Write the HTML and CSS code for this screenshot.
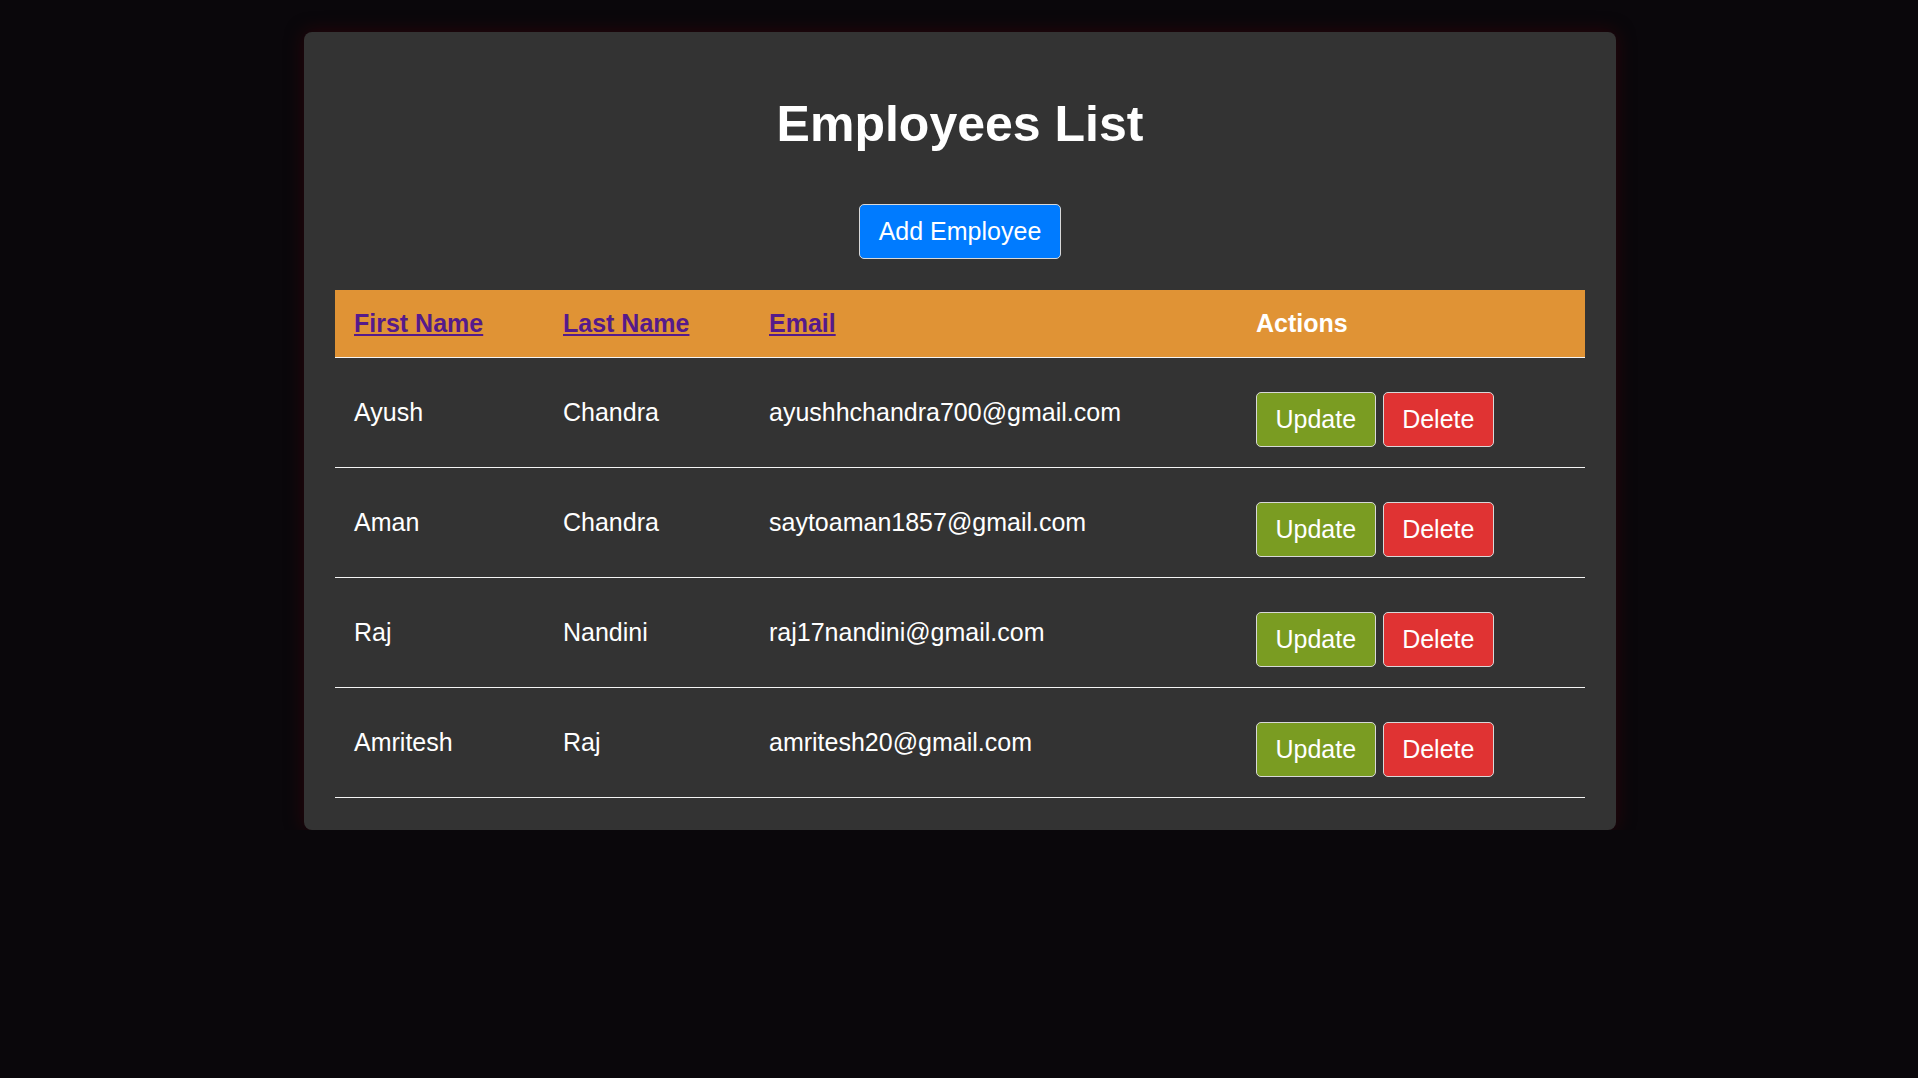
FILE: index.html
```html
<!DOCTYPE html>
<html lang="en">
<head>
<meta charset="utf-8">
<title>Employees List</title>
<link rel="stylesheet" href="styles.css">
</head>
<body>
<div class="card">
  <h1 class="title">Employees List</h1>
  <div class="toolbar">
    <button class="btn btn-add">Add Employee</button>
  </div>
  <table class="emp-table">
    <colgroup>
      <col class="c1"><col class="c2"><col class="c3"><col class="c4">
    </colgroup>
    <thead>
      <tr>
        <th><a class="sort" href="#">First Name</a></th>
        <th><a class="sort" href="#">Last Name</a></th>
        <th><a class="sort" href="#">Email</a></th>
        <th>Actions</th>
      </tr>
    </thead>
    <tbody>
      <tr>
        <td>Ayush</td><td>Chandra</td><td>ayushhchandra700@gmail.com</td>
        <td class="actions"><button class="btn btn-update">Update</button><button class="btn btn-delete">Delete</button></td>
      </tr>
      <tr>
        <td>Aman</td><td>Chandra</td><td>saytoaman1857@gmail.com</td>
        <td class="actions"><button class="btn btn-update">Update</button><button class="btn btn-delete">Delete</button></td>
      </tr>
      <tr>
        <td>Raj</td><td>Nandini</td><td>raj17nandini@gmail.com</td>
        <td class="actions"><button class="btn btn-update">Update</button><button class="btn btn-delete">Delete</button></td>
      </tr>
      <tr>
        <td>Amritesh</td><td>Raj</td><td>amritesh20@gmail.com</td>
        <td class="actions"><button class="btn btn-update">Update</button><button class="btn btn-delete">Delete</button></td>
      </tr>
    </tbody>
  </table>
</div>
</body>
</html>
```

FILE: styles.css
```css
html, body {
  margin: 0;
  padding: 0;
  background: #0a070b;
  font-family: "Liberation Sans", Arial, sans-serif;
  color: #ffffff;
}

body {
  padding: 32px 0 0 2px;
}

.card {
  width: 1250px;
  margin: 0 auto;
  padding: 31px 31px 32px 31px;
  background: #333333;
  border-radius: 8px;
  box-shadow: 0 0 18px rgba(70, 0, 10, 0.55);
}

.title {
  margin: 33px 0 51px;
  font-size: 50px;
  line-height: 57px;
  font-weight: bold;
  text-align: center;
  color: #ffffff;
}

.toolbar {
  display: flex;
  justify-content: center;
  margin-bottom: 31px;
}

.btn {
  font-family: "Liberation Sans", Arial, sans-serif;
  font-size: 25px;
  line-height: 29px;
  padding: 12px 18.5px;
  border: 1px solid #d8d8d8;
  border-radius: 5px;
  color: #ffffff;
  cursor: pointer;
}

.btn-add {
  background: #007bff;
}

.btn-update {
  background: #7a9c22;
}

.btn-delete {
  background: #e03333;
  margin-left: 7px;
}

.emp-table {
  width: 1250px;
  border-collapse: collapse;
  table-layout: fixed;
  font-size: 25px;
  line-height: 29px;
}

.c1 { width: 209px; }
.c2 { width: 206px; }
.c3 { width: 487px; }
.c4 { width: 348px; }

.emp-table th {
  background: #e09335;
  text-align: left;
  font-weight: bold;
  padding: 19px 19px;
  border-bottom: 1px solid #f4f4f4;
  color: #ffffff;
}

.sort {
  color: #551a8b;
  text-decoration: underline;
}

.emp-table td {
  padding: 19px 19px;
  vertical-align: middle;
  border-bottom: 1px solid #f4f4f4;
  color: #ffffff;
}

.emp-table td.actions {
  padding: 34px 19px 20px;
  white-space: nowrap;
}
```
